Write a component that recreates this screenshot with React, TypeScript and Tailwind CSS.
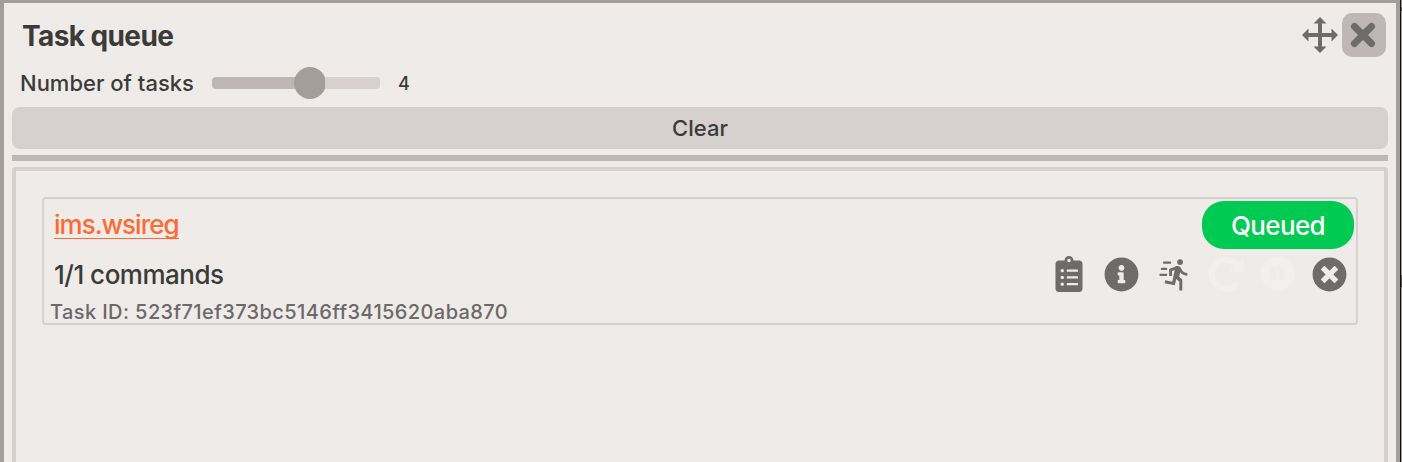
import React from "react";
import { FaClipboardList, FaInfoCircle, FaPauseCircle, FaTimesCircle } from "react-icons/fa";

function MoveIcon() {
  return (
    <svg viewBox="0 0 36 36" className="size-9" fill="currentColor" aria-label="Move">
      <path d="M18 0 24.5 6.5H20V16h9.5v-4.5L36 18l-6.500 6.500V20H20v9.500h4.500L18 36l-6.500-6.500H16V20H6.500v4.500L0 18l6.500-6.500V16H16V6.500h-4.500z" />
    </svg>
  );
}

function RunIcon() {
  return (
    <svg viewBox="0 0 24 24" className="size-[35px]" fill="currentColor" aria-label="Run">
      <path d="M16.5 5.5A2 2 0 0 0 18.5 3.5A2 2 0 0 0 16.5 1.5A2 2 0 0 0 14.5 3.5A2 2 0 0 0 16.5 5.5M12.9 19.4L13.9 15L16 17V23H18V15.5L15.9 13.5L16.5 10.5A6.5 6.5 0 0 0 21.5 12.9V10.9A4.5 4.5 0 0 1 17.7 8.7L16.7 7.1C16.3 6.5 15.7 6.1 15 6.1C14.7 6.1 14.5 6.2 14.2 6.2L9 8.3V13H11V9.6L12.8 8.9L11.2 17L6.3 16L5.9 18L12.9 19.400" />
      <path d="M5.500 3.900H9.700M4 8.200H7M3 12.200H7" fill="none" stroke="currentColor" strokeWidth="1.500" strokeLinecap="round" />
    </svg>
  );
}

function RetryIcon() {
  return (
    <svg viewBox="0 0 36 36" className="size-9" fill="none" stroke="currentColor" aria-label="Retry">
      <path d="M27.500 29.200A14.300 14.300 0 1 1 28 8" strokeWidth="6" strokeLinecap="round" />
      <path d="M34.500 3.500v11.500H23z" fill="currentColor" strokeWidth="2" strokeLinejoin="round" />
    </svg>
  );
}

export default function App() {
  return (
    <div className="flex h-[462px] w-[1402px] overflow-hidden bg-[#a49e9a] font-[Inter,sans-serif] font-[460] text-[#3b3b39]">
      <main className="flex min-w-0 flex-1 flex-col border-t-[3px] border-r-4 border-l-4 border-[#a49e9a] bg-[#efebe8] px-2 pt-2.5">
        <header className="flex h-11 shrink-0 items-center justify-between pr-0.5 pl-2.5">
          <h1 className="pt-0.5 text-[28px] leading-none font-bold tracking-[-0.6px]">Task queue</h1>
          <div className="flex items-center gap-1 text-[#6d6c6a]">
            <MoveIcon />
            <button className="flex size-11 items-center justify-center rounded-[10px] bg-[#bdb8b5]" aria-label="Close">
              <svg viewBox="0 0 26 26" className="-ml-0.5 size-[26px]" fill="none" stroke="currentColor" strokeWidth="7" strokeLinecap="round">
                <path d="M4.500 4.500 21.500 21.500M21.500 4.500 4.500 21.500" />
              </svg>
            </button>
          </div>
        </header>
        <div className="flex h-[50px] shrink-0 items-center pt-0.5 pl-2">
          <label className="w-[192px] text-[22px]">Number of tasks</label>
          <div className="flex h-8 w-[168px] items-center">
            <div className="h-3 w-[83px] rounded-l-[4px] bg-[#bdb8b5]" />
            <div className="-mx-px size-8 shrink-0 rounded-full bg-[#a49e9a]" />
            <div className="h-3 flex-1 rounded-r-[4px] bg-[#d6d1ce]" />
          </div>
          <span className="ml-[18px] text-[18px] font-medium">4</span>
        </div>
        <button className="h-[42px] shrink-0 rounded-lg bg-[#d6d1ce] text-[22px]">Clear</button>
        <div className="mt-1.5 h-1.5 shrink-0 bg-[#bdb8b5]" />
        <section className="mt-1.5 flex-1 rounded-t-[4px] border-4 border-b-0 border-[#d6d1ce] px-[26px] pt-[26px]">
          <article className="h-32 rounded-[4px] border-2 border-[#d6d1ce] pt-0.5 pr-0.5 pl-1.5">
            <div className="flex h-12 items-center justify-between pl-1">
              <a className="border-b border-[#ff6a33] text-[26px] leading-[26px] tracking-[-1px] text-[#ff6a33]">ims.wsireg</a>
              <span className="flex h-12 w-[152px] items-center justify-center rounded-[22px] bg-[#00ca51] text-[26px] font-medium tracking-[-0.650px] text-white">Queued</span>
            </div>
            <div className="flex h-[50px] items-center justify-between pr-[7px] pl-1">
              <span className="text-[26px] tracking-[-0.500px]">1/1 commands</span>
              <div className="flex items-center text-[#6d6c6a]">
                <FaClipboardList className="mr-[17px] size-9" />
                <FaInfoCircle className="mr-[17px] size-[35px]" />
                <RunIcon />
                <div className="ml-[17px] flex gap-4 text-[#f3efed]">
                  <RetryIcon />
                  <FaPauseCircle className="size-[35px]" />
                </div>
                <FaTimesCircle className="ml-[17px] size-[35px]" />
              </div>
            </div>
            <p className="pt-0.5 text-[20px] leading-[22px] font-medium tracking-[0.400px] text-[#6b696b]">Task ID: 523f71ef373bc5146ff3415620aba870</p>
          </article>
        </section>
      </main>
      <div className="w-px shrink-0 bg-[#111111]" />
      <div className="flex w-px shrink-0 flex-col bg-[#99999b]">
        <div className="mt-[7px] h-1 bg-[#555557]" />
        <div className="mt-[264px] h-3 bg-[#555557]" />
      </div>
    </div>
  );
}
